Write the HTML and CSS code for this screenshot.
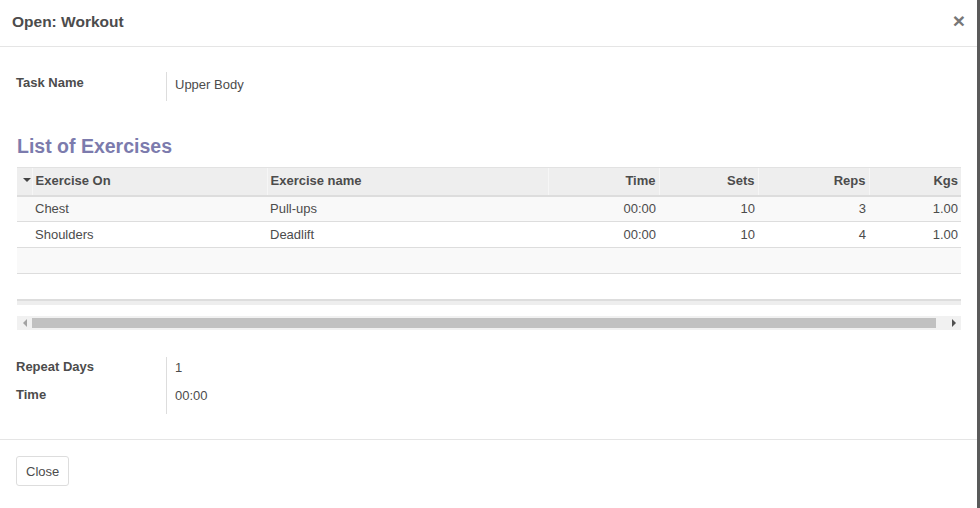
FILE: index.html
```html
<!DOCTYPE html>
<html>
<head>
<meta charset="utf-8">
<link rel="stylesheet" href="styles.css">
</head>
<body>
<div class="modal">
  <div class="modal-header">
    <h4 class="modal-title">Open: Workout</h4>
    <span class="close">×</span>
  </div>
  <div class="modal-body">
    <div class="field-group first">
      <div class="labels"><div class="lbl">Task Name</div></div>
      <div class="values"><div class="val">Upper Body</div></div>
    </div>
    <h3 class="section-title">List of Exercises</h3>
    <div class="table-wrap">
      <table class="list">
        <thead>
          <tr>
            <th class="c-toggle"><span class="caret"></span></th>
            <th class="c-on">Exercise On</th>
            <th class="c-name">Exercise name</th>
            <th class="c-time num">Time</th>
            <th class="c-sets num">Sets</th>
            <th class="c-reps num">Reps</th>
            <th class="c-kgs num">Kgs</th>
          </tr>
        </thead>
        <tbody>
          <tr class="odd"><td></td><td>Chest</td><td>Pull-ups</td><td class="num">00:00</td><td class="num">10</td><td class="num">3</td><td class="num">1.00</td></tr>
          <tr><td></td><td>Shoulders</td><td>Deadlift</td><td class="num">00:00</td><td class="num">10</td><td class="num">4</td><td class="num">1.00</td></tr>
          <tr class="odd empty"><td colspan="7"></td></tr>
          <tr class="empty"><td colspan="7"></td></tr>
        </tbody>
        <tfoot><tr><td colspan="7"></td></tr></tfoot>
      </table>
      <div class="hscroll">
        <span class="arr left"></span>
        <div class="thumb"></div>
        <span class="arr right"></span>
      </div>
    </div>
    <div class="field-group second">
      <div class="labels"><div class="lbl">Repeat Days</div><div class="lbl">Time</div></div>
      <div class="values"><div class="val">1</div><div class="val">00:00</div></div>
    </div>
  </div>
  <div class="modal-footer">
    <button class="btn">Close</button>
  </div>
</div>
</body>
</html>
```
FILE: styles.css
```css
* { box-sizing: border-box; }
html, body { margin: 0; padding: 0; }
body {
  font-family: "Liberation Sans", Arial, sans-serif;
  font-size: 13px;
  color: #4c4c4c;
  background: #5a5a5a;
}
.modal {
  width: 977px;
  height: 508px;
  background: #fff;
  display: flex;
  flex-direction: column;
}
.modal-header {
  height: 47px;
  border-bottom: 1px solid #e5e5e5;
  display: flex;
  align-items: center;
  justify-content: space-between;
  padding: 0 12px 2px 12px;
}
.modal-title {
  margin: 0;
  font-size: 15.5px;
  font-weight: bold;
  color: #4c4c4c;
}
.close {
  font-size: 21px;
  font-weight: bold;
  color: #777;
  line-height: 1;
  margin-top: -4px;
  margin-right: 0;
}
.modal-body {
  padding: 25px 16px 0 16px;
  flex: 1;
}
.field-group {
  display: flex;
}
.labels {
  width: 150px;
  padding-top: 3px;
}
.lbl {
  font-weight: bold;
  height: 28px;
  color: #4c4c4c;
}
.values {
  border-left: 1px solid #ddd;
  padding-left: 8px;
  padding-top: 5px;
}
.val {
  height: 28px;
}
.field-group.first .values { height: 29px; }
.section-title {
  margin: 32px 0 0 1px;
  font-size: 19.5px;
  font-weight: bold;
  color: #7c7bad;
  height: 22px;
  line-height: 22px;
}
.table-wrap {
  margin: 10px 0 0 1px;
  width: 944px;
}
table.list {
  width: 944px;
  border-collapse: collapse;
  table-layout: fixed;
}
table.list th {
  background: #eee;
  height: 28px;
  border-top: 1px solid #e2e2e2;
  border-bottom: 2px solid #ddd;
  border-left: 1px solid #f6f6f6;
  font-weight: bold;
  text-align: left;
  padding: 0 3px 2px 3px;
  color: #4c4c4c;
}
table.list th.num { text-align: right; }
table.list th:first-child { border-left: none; }
table.list td {
  height: 26px;
  border-bottom: 1px solid #ddd;
  padding: 0 3px;
}
table.list td:first-child { padding: 0; }
.num { text-align: right; }
table.list td.num { padding-right: 3px; }
tr.odd td { background: #f9f9f9; }
.c-toggle { width: 15px; }
.c-on { width: 235px; }
.c-name { width: 281px; }
.c-time { width: 111px; }
.c-sets { width: 99px; }
.c-reps { width: 111px; }
.c-kgs { width: 92px; }
.caret {
  display: inline-block;
  width: 0; height: 0;
  border-left: 4px solid transparent;
  border-right: 4px solid transparent;
  border-top: 4px solid #444;
  vertical-align: middle;
  margin-left: 3px;
  margin-top: -3px;
}
tr.empty td { height: 26px; }
tbody tr:last-child td { border-bottom: 2px solid #ddd; }
tfoot td {
  background: #eee;
  height: 5px !important;
  border: none !important;
  padding: 0;
}
.hscroll {
  margin-top: 11px;
  height: 14px;
  background: #f1f1f1;
  display: flex;
  align-items: center;
}
.thumb {
  flex: 1;
  height: 10px;
  background: #c1c1c1;
}
.arr {
  width: 15px;
  height: 14px;
  display: flex;
  align-items: center;
  justify-content: center;
  position: relative;
}
.arr.left::after {
  content: "";
  border-top: 4px solid transparent;
  border-bottom: 4px solid transparent;
  border-right: 4px solid #a3a3a3;
}
.arr.right { width: 25px; }
.arr.right::after {
  content: "";
  border-top: 4px solid transparent;
  border-bottom: 4px solid transparent;
  border-left: 4px solid #505050;
  margin-left: 11px;
}
.field-group.second { margin-top: 27px; }
.field-group.second .values { height: 57px; padding-top: 3px; }
.field-group.second .labels { padding-top: 2px; }
.modal-footer {
  border-top: 1px solid #e5e5e5;
  height: 69px;
  padding: 16px 16px;
}
.btn {
  font-family: "Liberation Sans", Arial, sans-serif;
  font-size: 13px;
  color: #4c4c4c;
  background: #fff;
  border: 1px solid #ddd;
  border-radius: 3px;
  height: 30px;
  padding: 0 9px;
}
```
